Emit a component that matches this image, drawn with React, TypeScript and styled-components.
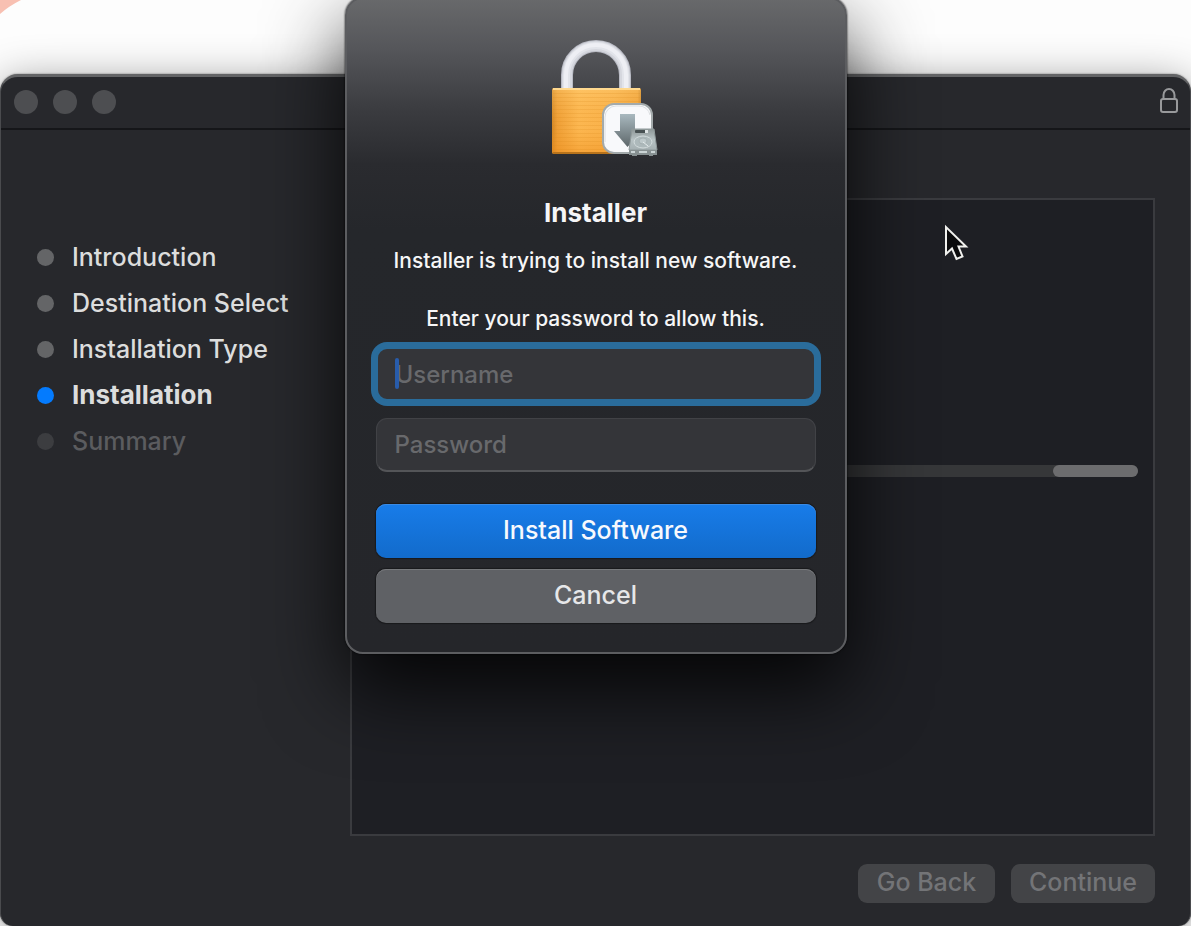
import React from "react";
import styled, { createGlobalStyle, css } from "styled-components";

const GlobalStyle = createGlobalStyle`
  *, *::before, *::after { box-sizing: border-box; }
  body {
    margin: 0;
    background: #fdfdfd;
    font-family: Inter, "Liberation Sans", sans-serif;
    font-weight: 450;
    -webkit-font-smoothing: antialiased;
  }
  button, input { font: inherit; }
`;

const Desktop = styled.div`
  position: relative;
  min-height: 100vh;
  display: flex;
  flex-direction: column;
  padding-top: 74px;
  overflow: hidden;
`;

const Wallpaper = styled.svg`
  position: absolute;
  top: 0;
  left: 0;
`;

const Window = styled.main`
  position: relative;
  flex: 1;
  display: flex;
  flex-direction: column;
  background: #27282c;
  border: 1px solid #4a4b4e;
  border-top: 3px solid #636466;
  border-bottom: 0;
  border-radius: 18px 18px 13px 13px;
  box-shadow: 0 8px 44px rgba(0, 0, 0, 0.42), 0 0 2px rgba(0, 0, 0, 0.5);
`;

const TitleBar = styled.header`
  display: flex;
  align-items: center;
  justify-content: space-between;
  height: 53px;
  padding: 0 11px 2px 13px;
  border-bottom: 2px solid #151619;
`;

const TrafficLights = styled.div`
  display: flex;
  gap: 15px;
`;

const Light = styled.button`
  width: 24px;
  height: 24px;
  padding: 0;
  border: 0;
  border-radius: 50%;
  background: #4d4e51;
`;

const LockButton = styled.button`
  display: flex;
  padding: 0 0 4px;
  border: 0;
  background: none;
`;

const Content = styled.div`
  flex: 1;
  display: grid;
  grid-template-columns: 313px 1fr;
  padding: 68px 35px 0 36px;
`;

const Steps = styled.ol`
  list-style: none;
  margin: 0;
  padding: 36px 0 0;
  font-size: 25px;
  line-height: 46px;
  color: #dcdddd;
`;

type StepState = "done" | "current" | "pending";

const dotColor = { done: "#646567", current: "#047bfe", pending: "#3c3d40" };

const Step = styled.li<{ $state: StepState }>`
  display: flex;
  align-items: center;
  gap: 18px;
  white-space: nowrap;
  ${(p) => p.$state === "current" && css`font-size: 26px; font-weight: 700;`}
  ${(p) => p.$state === "pending" && css`color: #5b5c5f;`}

  &::before {
    content: "";
    width: 17px;
    height: 17px;
    border-radius: 50%;
    background: ${(p) => dotColor[p.$state]};
  }
`;

const Panel = styled.section`
  padding: 265px 15px 0;
  background: #1e1f24;
  border: 2px solid #3a3b3f;
`;

const Track = styled.div`
  display: flex;
  justify-content: flex-end;
  height: 12px;
  border-radius: 6px;
  background: #363739;
`;

const Thumb = styled.div`
  width: 85px;
  border-radius: 6px;
  background: #6c6c6e;
`;

const Footer = styled.footer`
  display: flex;
  justify-content: flex-end;
  gap: 16px;
  padding: 28px 35px 23px;
`;

const NavButton = styled.button<{ $width: number }>`
  width: ${(p) => p.$width}px;
  height: 39px;
  padding: 0 0 2px;
  border: 0;
  border-radius: 9px;
  background: #434447;
  color: #737477;
  font-size: 25px;
  line-height: 37px;
`;

const DialogLayer = styled.div`
  position: absolute;
  top: -3px;
  left: 0;
  right: 0;
  display: flex;
  justify-content: center;
`;

const Dialog = styled.form`
  display: flex;
  flex-direction: column;
  align-items: center;
  width: 502px;
  padding: 34px 29px 29px;
  border: 2px solid #5c5d60;
  border-radius: 18px;
  background: linear-gradient(#68696b 0, #55565a 50px, #3b3c40 110px, #2a2b2f 165px, #25272b 230px, #25262a 100%);
  box-shadow: 0 0 2px #000, 0 34px 80px rgba(0, 0, 0, 0.85);
  color: #f6f6f7;
`;

const Title = styled.h1`
  margin: 34px 0 0;
  font-size: 26px;
  line-height: 36px;
  font-weight: 700;
`;

const Message = styled.p`
  margin: 15px 0 0;
  font-size: 21px;
  line-height: 29px;
  font-weight: 500;
  white-space: pre-line;
  text-align: center;
`;

const Field = styled.div<{ $focused?: boolean }>`
  position: relative;
  width: 100%;
  margin-top: ${(p) => (p.$focused ? 14 : 17)}px;

  ${(p) => p.$focused && css`
    &::before {
      content: "";
      position: absolute;
      top: 11px;
      left: 19px;
      width: 4px;
      height: 31px;
      border-radius: 2px;
      background: #285cab;
    }
  `}
`;

const Input = styled.input<{ $focused?: boolean }>`
  display: block;
  width: 100%;
  height: 54px;
  padding: 0 18px;
  border: 1px solid #414246;
  border-bottom: 2px solid #545558;
  border-radius: 11px;
  outline: 0;
  background: #343539;
  color: #f6f6f7;
  font-size: 24px;
  caret-color: #285cab;

  &::placeholder { color: #68696c; opacity: 1; }

  ${(p) => p.$focused && css`
    border: 2px solid #2a6c9b;
    box-shadow: 0 0 0 5px #2a6c9b;
  `}
`;

const Actions = styled.div`
  display: flex;
  flex-direction: column;
  gap: 11px;
  width: 100%;
  margin-top: 32px;
`;

const ActionButton = styled.button<{ $primary?: boolean }>`
  width: 100%;
  height: 54px;
  padding: 0 0 2px;
  border: 0;
  border-radius: 10px;
  font-size: 25px;
  color: ${(p) => (p.$primary ? "#f7f9fd" : "#e6e7e9")};
  background: ${(p) => (p.$primary ? "linear-gradient(#187ce9, #126bcb)" : "#5f6165")};
  box-shadow: inset 0 1px 0 ${(p) => (p.$primary ? "#3a8ae4" : "#77797c")}, 0 0 1px 1px rgba(0, 0, 0, 0.35);
`;

const Pointer = styled.svg`
  position: absolute;
  top: 221px;
  left: 941px;
`;

const steps: { label: string; state: StepState }[] = [
  { label: "Introduction", state: "done" },
  { label: "Destination Select", state: "done" },
  { label: "Installation Type", state: "done" },
  { label: "Installation", state: "current" },
  { label: "Summary", state: "pending" },
];

const InstallerLock = () => (
  <svg width="128" height="128" viewBox="0 0 128 128" aria-hidden="true">
    <defs>
      <linearGradient id="brass" x1="0" x2="1" y1="0" y2="0">
        <stop offset="0" stopColor="#cf8424" />
        <stop offset="0.06" stopColor="#ee9f38" />
        <stop offset="0.3" stopColor="#fdba55" />
        <stop offset="0.7" stopColor="#f9b24c" />
        <stop offset="0.96" stopColor="#f0a23a" />
        <stop offset="1" stopColor="#c98124" />
      </linearGradient>
      <linearGradient id="brassShade" x1="0" x2="0" y1="0" y2="1">
        <stop offset="0" stopColor="#ffd27a" stopOpacity="0.4" />
        <stop offset="0.6" stopColor="#f59d28" stopOpacity="0.1" />
        <stop offset="1" stopColor="#ee8d1c" stopOpacity="0.5" />
      </linearGradient>
      <pattern id="brushed" width="90" height="4" patternUnits="userSpaceOnUse">
        <rect width="90" height="1" fill="#d98718" opacity="0.2" />
      </pattern>
      <linearGradient id="arrow" x1="0" x2="0" y1="0" y2="1">
        <stop offset="0" stopColor="#a9b9bf" />
        <stop offset="1" stopColor="#5d6669" />
      </linearGradient>
      <linearGradient id="drive" x1="0" x2="0" y1="0" y2="1">
        <stop offset="0" stopColor="#8d9697" />
        <stop offset="0.5" stopColor="#b7c2c4" />
        <stop offset="1" stopColor="#a5b0b2" />
      </linearGradient>
    </defs>
    <path d="M35 57V42a29 29 0 0 1 58 0V57" fill="none" stroke="#b9bbc4" strokeWidth="12" />
    <path d="M35 57V42a29 29 0 0 1 58 0V57" fill="none" stroke="#d5d7de" strokeWidth="10" />
    <path d="M34.500 57V42a29.500 29.500 0 0 1 59 0V57" fill="none" stroke="#e2e4ea" strokeWidth="7" />
    <path d="M34 57V42a30 30 0 0 1 60 0V57" fill="none" stroke="#eeeff4" strokeWidth="4" />
    <rect x="20" y="55" width="89" height="66" rx="2" fill="url(#brass)" />
    <rect x="20" y="55" width="89" height="66" rx="2" fill="url(#brassShade)" />
    <rect x="21" y="58" width="87" height="61" fill="url(#brushed)" />
    <path d="M21 56h87" stroke="#ffd98f" strokeWidth="2" />
    <path d="M21 120h87" stroke="#b8731b" strokeWidth="2" />
    <rect x="71" y="71" width="49" height="49" rx="11" fill="#f8f9fb" stroke="#a3aaab" strokeWidth="2" />
    <path d="M73 109V84a11 11 0 0 1 11-11h23a11 11 0 0 1 11 9" fill="none" stroke="#dcdfe1" strokeWidth="1" />
    <path d="M88 81h15v17h7l-14.500 16L82 98h6z" fill="url(#arrow)" />
    <path d="M100 96h22l3 21H97z" fill="url(#drive)" stroke="#8f999a" strokeWidth="1" />
    <path d="M97 117h28v5h-4v1h-4v-1h-12v1h-5v-1h-3z" fill="#879091" />
    <path d="M99 119h4M107 119h8M119 119h4" stroke="#cbd4d5" strokeWidth="2" />
    <rect x="103" y="97" width="12" height="3" rx="1" fill="#475052" />
    <rect x="113" y="97" width="3" height="3" fill="#dde3e4" />
    <ellipse cx="111" cy="109" rx="9" ry="6" fill="#adb9bb" stroke="#d3dcdd" strokeWidth="1" />
    <ellipse cx="111" cy="108" rx="4" ry="3" fill="#bec9cb" stroke="#a5b0b2" strokeWidth="1" />
    <path d="M111 109l5 4" stroke="#e6edee" strokeWidth="1" />
  </svg>
);

const TitleLock = () => (
  <svg width="20" height="26" viewBox="0 0 20 26" fill="none" stroke="#98999b" strokeWidth="2" aria-hidden="true">
    <rect x="2" y="12" width="16" height="13" rx="2" />
    <path d="M4.500 12V8a5.500 6 0 0 1 11 0v4" />
  </svg>
);

export default function App() {
  return (
    <Desktop>
      <GlobalStyle />
      <Wallpaper width="24" height="16" aria-hidden="true">
        <path d="M0 0H21Q9 6 0 14Z" fill="#f8c0b2" />
      </Wallpaper>
      <Window>
        <TitleBar>
          <TrafficLights>
            <Light type="button" aria-label="Close" />
            <Light type="button" aria-label="Minimize" />
            <Light type="button" aria-label="Zoom" />
          </TrafficLights>
          <LockButton type="button" aria-label="Show certificate">
            <TitleLock />
          </LockButton>
        </TitleBar>
        <Content>
          <Steps>
            {steps.map((s) => (
              <Step key={s.label} $state={s.state} aria-current={s.state === "current" ? "step" : undefined}>
                {s.label}
              </Step>
            ))}
          </Steps>
          <Panel>
            <Track role="progressbar" aria-label="Installation progress">
              <Thumb />
            </Track>
          </Panel>
        </Content>
        <Footer>
          <NavButton type="button" disabled $width={137}>Go Back</NavButton>
          <NavButton type="button" disabled $width={144}>Continue</NavButton>
        </Footer>
      </Window>
      <DialogLayer>
        <Dialog role="dialog" aria-labelledby="dialog-title" onSubmit={(e) => e.preventDefault()}>
          <InstallerLock />
          <Title id="dialog-title">Installer</Title>
          <Message>{"Installer is trying to install new software.\n\nEnter your password to allow this."}</Message>
          <Field $focused>
            <Input $focused type="text" aria-label="Username" placeholder="Username" />
          </Field>
          <Field>
            <Input type="password" aria-label="Password" placeholder="Password" />
          </Field>
          <Actions>
            <ActionButton type="submit" $primary>Install Software</ActionButton>
            <ActionButton type="button">Cancel</ActionButton>
          </Actions>
        </Dialog>
      </DialogLayer>
      <Pointer width="30" height="42" viewBox="0 0 30 42" aria-hidden="true">
        <path d="M5 6V33L11 27.500L15.500 38L21.500 35.500L17.500 25.500H25Z" fill="#0b0b0c" stroke="#f1f1ee" strokeWidth="2" strokeLinejoin="miter" />
      </Pointer>
    </Desktop>
  );
}
